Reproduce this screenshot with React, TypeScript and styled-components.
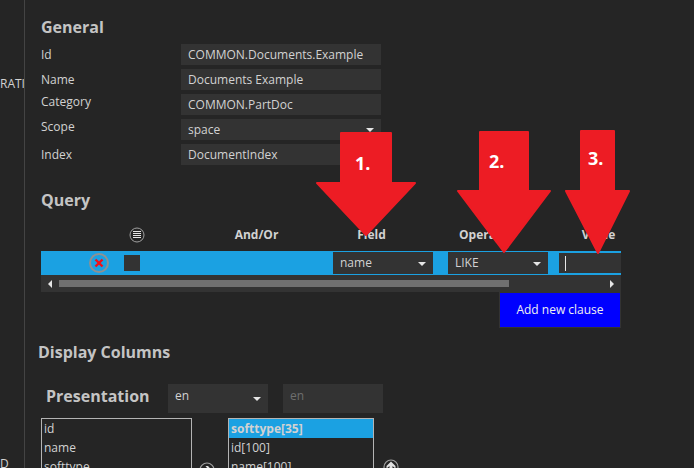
import React from "react";
import styled, { createGlobalStyle, css } from "styled-components";

const c = {
  page: "#252525",
  field: "#333333",
  text: "#d2d2d2",
  heading: "#c4c4c4",
  blue: "#1ba1e2",
  line: "#444444",
  red: "#ed1c24",
};

const GlobalStyle = createGlobalStyle`
  * { box-sizing: border-box; }
  body {
    margin: 0;
    background: ${c.page};
    color: ${c.text};
    font: 12px/16px "Open Sans", "Noto Sans", sans-serif;
  }
  button, input, select { font: inherit; color: inherit; }
`;

const Page = styled.div`
  position: relative;
  display: flex;
  height: 100vh;
  overflow: hidden;
`;

const Sidebar = styled.nav`
  flex: none;
  width: 25px;
  display: flex;
  flex-direction: column;
  gap: 364px;
  padding-top: 76px;
  border-right: 1px solid ${c.line};
  overflow: hidden;
  white-space: nowrap;
  line-height: 16px;
`;

const Main = styled.main`
  flex: 1;
  min-width: 0;
  padding: 15px 16px 0;
`;

const Heading = styled.h2`
  margin: 0;
  font-size: 16px;
  line-height: 24px;
  font-weight: 700;
  color: ${c.heading};
`;

const FormGrid = styled.div`
  display: flex;
  flex-direction: column;
  gap: 4px;
  padding-top: 5px;
`;

const FormRow = styled.div<{ $top?: boolean }>`
  display: flex;
  align-items: ${(p) => (p.$top ? "flex-start" : "center")};
  height: 21px;
`;

const FormLabel = styled.label`
  flex: none;
  width: 140px;
`;

const fieldStyle = css`
  display: block;
  width: 100%;
  height: 100%;
  margin: 0;
  padding: 0 7px;
  border: 0;
  border-radius: 0;
  outline: 0;
  background: ${c.field};
`;

const FieldBox = styled.div<{ $w: number; $h: number; $raise?: number }>`
  position: relative;
  flex: none;
  width: ${(p) => p.$w}px;
  height: ${(p) => p.$h}px;
  input, select { padding-bottom: ${(p) => p.$raise ?? 0}px; }
`;

const TextInput = styled.input`
  ${fieldStyle}
  &::placeholder { color: #6e6e6e; opacity: 1; }
`;

const SelectInput = styled.select`
  ${fieldStyle}
  appearance: none;
`;

const SelectArrow = styled.svg<{ $top: number }>`
  position: absolute;
  right: 7px;
  top: ${(p) => p.$top}px;
  pointer-events: none;
`;

type DropdownProps = { id?: string; label?: string; value: string; w: number; h: number; raise?: number };

const Dropdown = ({ id, label, value, w, h, raise }: DropdownProps) => (
  <FieldBox $w={w} $h={h} $raise={raise}>
    <SelectInput id={id} aria-label={label} defaultValue={value}>
      <option>{value}</option>
    </SelectInput>
    <SelectArrow $top={Math.floor(h / 2) - 1} width="8" height="4" viewBox="0 0 8 4" aria-hidden="true">
      <path d="M0 0H8L4 4Z" fill="#e6e6e6" />
    </SelectArrow>
  </FieldBox>
);

const Query = styled.section`
  display: flex;
  flex-direction: column;
  align-items: flex-end;
  max-width: 580px;
  padding-top: 23px;
`;

const QueryHeading = styled(Heading)`
  align-self: flex-start;
`;

const TableClip = styled.div`
  width: 100%;
  padding-top: 9px;
  overflow: hidden;
`;

const Table = styled.table`
  table-layout: fixed;
  width: 629px;
  border-collapse: collapse;
`;

const Th = styled.th<{ $right?: number }>`
  height: 30px;
  padding: 0 ${(p) => p.$right ?? 22}px 3px 0;
  text-align: center;
  vertical-align: middle;
  font-weight: 700;
  svg { display: block; margin: 0 auto; }
`;

const Row = styled.tr`
  height: 24px;
  background: ${c.blue};
`;

const Td = styled.td<{ $left?: number }>`
  padding: 0 0 0 ${(p) => p.$left ?? 8}px;
  vertical-align: middle;
`;

const IconButton = styled.button`
  display: block;
  padding: 0;
  border: 0;
  background: none;
  svg { display: block; }
`;

const CheckBox = styled.input`
  display: block;
  appearance: none;
  width: 16px;
  height: 16px;
  margin: 0;
  background: ${c.field};
`;

const ValueBox = styled.div`
  display: flex;
  align-items: center;
  width: 100px;
  height: 20px;
  padding-left: 6px;
  background: ${c.field};
`;

const Caret = styled.span`
  flex: none;
  width: 1px;
  height: 15px;
  background: #e6e6e6;
`;

const ScrollBar = styled.div`
  display: flex;
  align-items: center;
  width: 100%;
  height: 17px;
  padding: 0 6px;
  background: ${c.field};
`;

const ScrollTrack = styled.div`
  flex: 1;
  margin: 0 9px 0 7px;
`;

const ScrollThumb = styled.div`
  width: 83%;
  height: 7px;
  background: #707070;
`;

const AddButton = styled.button`
  width: 122px;
  height: 36px;
  padding: 0;
  border: 1px solid #333333;
  background: #0000ff;
  color: #f0f0f0;
`;

const Display = styled.section`
  padding-top: 12px;
`;

const DisplayHeading = styled(Heading)`
  margin-left: -3px;
`;

const Presentation = styled.div`
  display: flex;
  align-items: flex-start;
  gap: 15px;
  padding: 20px 0 5px 5px;
`;

const PresentationTitle = styled(Heading)`
  width: 107px;
`;

const Lists = styled.div`
  display: flex;
  align-items: flex-start;
`;

const ListBox = styled.select<{ $w: number }>`
  appearance: none;
  width: ${(p) => p.$w}px;
  height: 120px;
  padding: 0;
  border: 1px solid #b4b4b4;
  border-radius: 0;
  outline: 0;
  background: ${c.page};
  overflow: hidden;
`;

const ListItem = styled.option`
  min-height: 0;
  height: 19px;
  padding: 1px 2px;
  line-height: 17px;
  color: ${c.text};
  &:checked {
    background: linear-gradient(${c.blue}, ${c.blue});
    color: ${c.text};
    font-weight: 700;
  }
`;

const SideButton = styled(IconButton)<{ $top: number; $left: number }>`
  flex: none;
  width: 36px;
  padding: ${(p) => p.$top}px 0 0 ${(p) => p.$left}px;
`;

const ArrowLayer = styled.svg`
  position: absolute;
  left: 0;
  top: 0;
  pointer-events: none;
  text {
    font: 700 18px "Open Sans", "Noto Sans", sans-serif;
    fill: #ffffff;
  }
  path {
    fill: ${c.red};
    stroke: ${c.red};
    stroke-width: 2;
    stroke-linejoin: round;
  }
`;

const steps = [
  { d: "M341 133H391V183H415L366 235L317 183H341Z", x: 355, y: 170, label: "1." },
  { d: "M480 132H528V191H550L504 252L458 191H480Z", x: 489, y: 168, label: "2." },
  { d: "M581 131H614V191H629L598 253L566 191H581Z", x: 588, y: 165, label: "3." },
];

const MoveIcon = ({ d }: { d: string }) => (
  <svg width="16" height="16" viewBox="0 0 16 16" fill="none" aria-hidden="true">
    <circle cx="8" cy="8" r="7" stroke="#a0a0a0" strokeWidth="1.2" />
    <path d={d} fill="#e0e0e0" />
  </svg>
);

const upArrow = "M8 2.5L12.5 7V9.5L9.5 7V13H6.5V7L3.5 9.5V7Z";
const rightArrow = "M6.5 4H9L13 8.5L9 13H6.5L9 9.8H3V7.2H9Z";

export default function App() {
  return (
    <>
      <GlobalStyle />
      <Page>
        <Sidebar>
          <span>RATIVE</span>
          <span>D</span>
        </Sidebar>
        <Main>
          <section>
            <Heading>General</Heading>
            <FormGrid>
              <FormRow>
                <FormLabel htmlFor="id">Id</FormLabel>
                <FieldBox $w={200} $h={21}><TextInput id="id" defaultValue="COMMON.Documents.Example" /></FieldBox>
              </FormRow>
              <FormRow>
                <FormLabel htmlFor="name">Name</FormLabel>
                <FieldBox $w={200} $h={21}><TextInput id="name" defaultValue="Documents Example" /></FieldBox>
              </FormRow>
              <FormRow $top>
                <FormLabel htmlFor="category">Category</FormLabel>
                <FieldBox $w={200} $h={21}><TextInput id="category" defaultValue="COMMON.PartDoc" /></FieldBox>
              </FormRow>
              <FormRow $top>
                <FormLabel htmlFor="scope">Scope</FormLabel>
                <Dropdown id="scope" value="space" w={200} h={21} />
              </FormRow>
              <FormRow>
                <FormLabel htmlFor="index">Index</FormLabel>
                <FieldBox $w={200} $h={21}><TextInput id="index" defaultValue="DocumentIndex" /></FieldBox>
              </FormRow>
            </FormGrid>
          </section>

          <Query>
            <QueryHeading>Query</QueryHeading>
            <TableClip>
              <Table>
                <colgroup>
                  <col width="75" />
                  <col width="94" />
                  <col width="115" />
                  <col width="115" />
                  <col width="115" />
                  <col width="115" />
                </colgroup>
                <thead>
                  <tr>
                    <Th />
                    <Th $right={53}>
                      <svg width="16" height="16" viewBox="0 0 16 16" role="img" aria-label="Select all">
                        <circle cx="8" cy="8" r="7" fill="none" stroke="#a0a0a0" />
                        <path d="M4 4.5H12M4 6.5H12M4 8.5H12M4 10.5H12" stroke="#e6e6e6" strokeWidth="1.2" />
                      </svg>
                    </Th>
                    <Th>And/Or</Th>
                    <Th>Field</Th>
                    <Th>Operator</Th>
                    <Th $right={28}>Value</Th>
                  </tr>
                </thead>
                <tbody>
                  <Row>
                    <Td $left={48}>
                      <IconButton aria-label="Remove clause">
                        <svg width="20" height="20" viewBox="0 0 20 20" fill="none">
                          <circle cx="10" cy="10" r="9" stroke="#909090" strokeWidth="2" />
                          <path d="M6.5 6.5L13.5 13.5M13.5 6.5L6.5 13.5" stroke="#f01018" strokeWidth="2.4" />
                        </svg>
                      </IconButton>
                    </Td>
                    <Td><CheckBox type="checkbox" aria-label="Select clause" /></Td>
                    <Td />
                    <Td><Dropdown label="Field" value="name" w={100} h={22} /></Td>
                    <Td><Dropdown label="Operator" value="LIKE" w={100} h={22} /></Td>
                    <Td $left={4}>
                      <ValueBox>
                        <Caret />
                        <TextInput aria-label="Value" />
                      </ValueBox>
                    </Td>
                  </Row>
                </tbody>
              </Table>
            </TableClip>
            <ScrollBar>
              <IconButton aria-label="Scroll left">
                <svg width="5" height="8" viewBox="0 0 5 8"><path d="M5 0V8L1 4Z" fill="#e6e6e6" /></svg>
              </IconButton>
              <ScrollTrack><ScrollThumb /></ScrollTrack>
              <IconButton aria-label="Scroll right">
                <svg width="5" height="8" viewBox="0 0 5 8"><path d="M0 0V8L4 4Z" fill="#e6e6e6" /></svg>
              </IconButton>
            </ScrollBar>
            <AddButton>Add new clause</AddButton>
          </Query>

          <Display>
            <DisplayHeading>Display Columns</DisplayHeading>
            <Presentation>
              <PresentationTitle as="h3">Presentation</PresentationTitle>
              <Dropdown label="Language" value="en" w={100} h={29} raise={6} />
              <FieldBox $w={100} $h={29} $raise={6}>
                <TextInput aria-label="Presentation text" placeholder="en" />
              </FieldBox>
            </Presentation>
            <Lists>
              <ListBox $w={151} multiple aria-label="Available columns">
                <ListItem>id</ListItem>
                <ListItem>name</ListItem>
                <ListItem>softtype</ListItem>
              </ListBox>
              <SideButton $top={44} $left={7} aria-label="Move column"><MoveIcon d={rightArrow} /></SideButton>
              <ListBox $w={146} multiple defaultValue={["softtype[35]"]} aria-label="Displayed columns">
                <ListItem>softtype[35]</ListItem>
                <ListItem>id[100]</ListItem>
                <ListItem>name[100]</ListItem>
              </ListBox>
              <SideButton $top={41} $left={9} aria-label="Move up"><MoveIcon d={upArrow} /></SideButton>
            </Lists>
          </Display>
        </Main>
        <ArrowLayer width="640" height="260" viewBox="0 0 640 260">
          {steps.map((s) => (
            <g key={s.label}>
              <path d={s.d} />
              <text x={s.x} y={s.y}>{s.label}</text>
            </g>
          ))}
        </ArrowLayer>
      </Page>
    </>
  );
}
